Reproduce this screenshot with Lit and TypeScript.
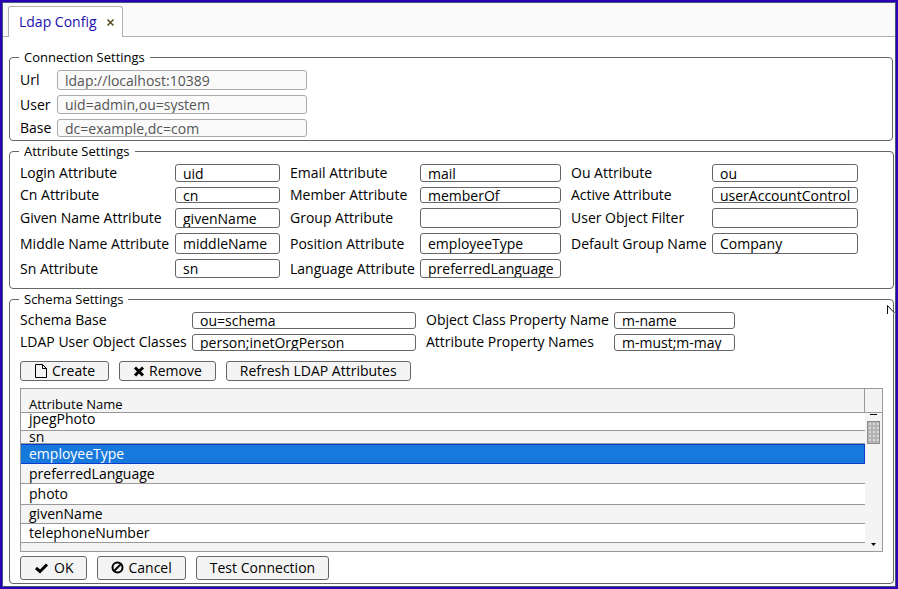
import { LitElement, html, css, svg } from "lit";
import { customElement, property } from "lit/decorators.js";
import { classMap } from "lit/directives/class-map.js";
import { styleMap } from "lit/directives/style-map.js";

interface Field {
  id: string;
  label: string;
  value: string;
}

const connection: Field[] = [
  { id: "url", label: "Url", value: "ldap://localhost:10389" },
  { id: "user", label: "User", value: "uid=admin,ou=system" },
  { id: "base", label: "Base", value: "dc=example,dc=com" },
];

const attributes: Field[] = [
  { id: "login", label: "Login Attribute", value: "uid" },
  { id: "email", label: "Email Attribute", value: "mail" },
  { id: "ou", label: "Ou Attribute", value: "ou" },
  { id: "cn", label: "Cn Attribute", value: "cn" },
  { id: "member", label: "Member Attribute", value: "memberOf" },
  { id: "active", label: "Active Attribute", value: "userAccountControl" },
  { id: "given", label: "Given Name Attribute", value: "givenName" },
  { id: "group", label: "Group Attribute", value: "" },
  { id: "filter", label: "User Object Filter", value: "" },
  { id: "middle", label: "Middle Name Attribute", value: "middleName" },
  { id: "position", label: "Position Attribute", value: "employeeType" },
  { id: "default-group", label: "Default Group Name", value: "Company" },
  { id: "sn", label: "Sn Attribute", value: "sn" },
  { id: "language", label: "Language Attribute", value: "preferredLanguage" },
];

const schema: Field[] = [
  { id: "schema-base", label: "Schema Base", value: "ou=schema" },
  { id: "class-prop", label: "Object Class Property Name", value: "m-name" },
  { id: "user-classes", label: "LDAP User Object Classes", value: "person;inetOrgPerson" },
  { id: "attr-props", label: "Attribute Property Names", value: "m-must;m-may" },
];

const rows = [
  { name: "jpegPhoto", height: 18 },
  { name: "sn", height: 13 },
  { name: "employeeType", height: 20, selected: true },
  { name: "preferredLanguage", height: 20 },
  { name: "photo", height: 21 },
  { name: "givenName", height: 19 },
  { name: "telephoneNumber", height: 19 },
  { name: "", height: 8 },
];

const icons = {
  file: {
    width: 14,
    shape: svg`<path d="M1.5 0.5H8.5L12.5 4.5V13.5H1.5Z M8.5 0.5V4.5H12.5" fill="none" stroke="currentColor"/>`,
  },
  cross: {
    width: 12,
    shape: svg`<path d="M2 3.5L10 11.5M10 3.5L2 11.5" fill="none" stroke="currentColor" stroke-width="3"/>`,
  },
  check: {
    width: 16,
    shape: svg`<path d="M2 7L6 10.5L13 3.5" fill="none" stroke="currentColor" stroke-width="3"/>`,
  },
  ban: {
    width: 13,
    shape: svg`<circle cx="6.5" cy="6.5" r="5" fill="none" stroke="currentColor" stroke-width="2"/><path d="M3 10L10 3" stroke="currentColor" stroke-width="2"/>`,
  },
};

@customElement("icon-button")
export class IconButton extends LitElement {
  @property() icon = "";
  @property() label = "";

  static styles = css`
    :host {
      display: flex;
    }
    .button {
      display: flex;
      align-items: center;
      gap: 4px;
      padding: 0 13px;
      border: 1px solid #666;
      border-radius: 3px;
      background: #f4f4f4;
      color: #000;
      font: inherit;
      line-height: 16px;
      white-space: nowrap;
    }
    .icon {
      height: 14px;
    }
  `;

  render() {
    const icon = icons[this.icon as keyof typeof icons];
    return html`<button class="button" type="button">
      ${icon
        ? html`<svg class="icon" width=${icon.width} viewBox="0 0 ${icon.width} 14" aria-hidden="true">${icon.shape}</svg>`
        : null}
      <span>${this.label}</span>
    </button>`;
  }
}

@customElement("app-root")
export class AppRoot extends LitElement {
  static styles = css`
    :host {
      display: block;
      font-family: "Open Sans", "Noto Sans", sans-serif;
      font-size: 14px;
      line-height: 16px;
      color: #000;
    }
    * {
      box-sizing: border-box;
    }
    .window {
      min-height: 100vh;
      display: flex;
      flex-direction: column;
      border: 2px solid #2a00b4;
      background: #fff;
    }
    .frame {
      flex: 1;
      display: flex;
      flex-direction: column;
      border: 1px solid #44547c;
    }
    .tabs {
      display: flex;
      height: 34px;
      padding: 3px 0 0 5px;
      background: linear-gradient(#b0b0b0, #b0b0b0) bottom / 100% 1px no-repeat #fafafa;
    }
    .tab {
      display: flex;
      align-items: center;
      gap: 9px;
      padding: 0 7px 0 10px;
      border: 1px solid #b0b0b0;
      border-bottom: 0;
      border-radius: 3px 3px 0 0;
      background: #fff;
      color: #1a10b0;
    }
    .close {
      display: flex;
      padding: 0;
      border: 0;
      background: none;
      color: #5a4a20;
    }
    .close-icon {
      width: 9px;
      height: 9px;
    }
    .page {
      flex: 1;
      display: flex;
      flex-direction: column;
      gap: 2px;
      padding: 12px 1px 2px 6px;
    }
    .group {
      min-width: 0;
      margin: 0;
      padding: 0;
      border: 1px solid #666;
      border-radius: 4px;
    }
    .group.connection {
      margin-right: 1px;
      padding-bottom: 3px;
    }
    .group.attributes {
      padding-bottom: 10px;
    }
    .group.schema {
      flex: 1;
    }
    .legend {
      margin-left: 9px;
      padding: 0 5px;
      font-size: 13px;
      line-height: 16px;
    }
    .fields {
      display: grid;
      row-gap: 5px;
      padding-top: 5px;
    }
    .connection .fields {
      grid-template: 20px 19px 18px / 47px 250px;
    }
    .attributes .fields {
      grid-template: 18px 16px 20px 21px 19px / 165px 105px 140px 141px 151px 146px;
    }
    .schema .fields {
      grid-template: 17px 17px / 182px 224px 198px 121px;
    }
    .label {
      display: flex;
      align-items: center;
      min-height: 0;
      padding-left: 10px;
      white-space: nowrap;
    }
    .schema .label {
      padding-bottom: 2px;
    }
    .input {
      width: 100%;
      min-width: 0;
      height: 100%;
      min-height: 0;
      padding: 0 7px;
      border: 1px solid #666;
      border-radius: 3px;
      background: #fff;
      color: #000;
      font: inherit;
    }
    .connection .input {
      border-color: #aaa;
      background: #fafafa;
      color: #555;
    }
    .buttons {
      display: flex;
      gap: 10px;
      padding: 10px 10px 7px;
    }
    .buttons icon-button {
      height: 20px;
    }
    .buttons.footer {
      padding: 4px 10px 0;
    }
    .footer icon-button {
      height: 24px;
    }
    .grid {
      display: flex;
      margin: 0 10px;
      height: 164px;
      border: 1px solid #999;
      overflow: hidden;
      background: #f4f4f4;
    }
    .table {
      flex: 1;
      border-collapse: separate;
      border-spacing: 0;
      table-layout: fixed;
    }
    .head {
      height: 24px;
      padding: 7px 8px 0;
      border-right: 1px solid #999;
      border-bottom: 1px solid #999;
      font-size: 13px;
      font-weight: 400;
      text-align: left;
    }
    .cell {
      padding: 0 8px;
      border-bottom: 1px solid #999;
      background: #fff;
      line-height: 12px;
    }
    .row:first-child .cell {
      vertical-align: top;
    }
    .row:nth-child(even) .cell {
      background: #f4f4f4;
    }
    .row.selected .cell {
      border: solid #0a3cd0;
      border-width: 1px 1px 1px 0;
      background: #1779dc;
      color: #fff;
    }
    .row:last-child .cell {
      border-bottom: 0;
    }
    .scroll {
      display: flex;
      flex-direction: column;
      align-items: center;
      width: 17px;
    }
    .corner {
      width: 100%;
      height: 24px;
      border-bottom: 1px solid #999;
    }
    .arrow {
      width: 7px;
      height: 8px;
    }
    .thumb {
      width: 13px;
      height: 23px;
      border: 1px solid #8c8c8c;
      background: radial-gradient(#d8d8d8 1px, #b4b4b4 1px) 0 0 / 4px 4px;
    }
    .track {
      flex: 1;
      width: 100%;
    }
    .pointer {
      position: absolute;
      top: 304px;
      right: 3px;
      width: 9px;
      height: 14px;
    }
  `;

  private fields(list: Field[], readonly = false) {
    return html`<div class="fields">
      ${list.map(
        (f) => html`<label class="label" for=${f.id}>${f.label}</label>
          <input class="input" id=${f.id} type="text" .value=${f.value} ?readonly=${readonly} />`
      )}
    </div>`;
  }

  render() {
    return html`
      <main class="window">
        <div class="frame">
          <nav class="tabs">
            <div class="tab">
              <span>Ldap Config</span>
              <button class="close" type="button" aria-label="Close tab">
                <svg class="close-icon" viewBox="0 0 9 9" aria-hidden="true">
                  <path d="M1.5 1.5L7.5 7.5M7.5 1.5L1.5 7.5" stroke="currentColor" stroke-width="1.5" />
                </svg>
              </button>
            </div>
          </nav>
          <form class="page">
            <fieldset class="group connection">
              <legend class="legend">Connection Settings</legend>
              ${this.fields(connection, true)}
            </fieldset>
            <fieldset class="group attributes">
              <legend class="legend">Attribute Settings</legend>
              ${this.fields(attributes)}
            </fieldset>
            <fieldset class="group schema">
              <legend class="legend">Schema Settings</legend>
              ${this.fields(schema)}
              <div class="buttons">
                <icon-button icon="file" label="Create"></icon-button>
                <icon-button icon="cross" label="Remove"></icon-button>
                <icon-button label="Refresh LDAP Attributes"></icon-button>
              </div>
              <div class="grid">
                <table class="table">
                  <thead>
                    <tr><th class="head" scope="col">Attribute Name</th></tr>
                  </thead>
                  <tbody>
                    ${rows.map(
                      (r) => html`<tr class=${classMap({ row: true, selected: !!r.selected })}>
                        <td class="cell" style=${styleMap({ height: `${r.height}px` })}>${r.name}</td>
                      </tr>`
                    )}
                  </tbody>
                </table>
                <div class="scroll">
                  <div class="corner"></div>
                  <svg class="arrow" viewBox="0 0 7 8" aria-hidden="true"><path d="M0 1H7V2H0Z" fill="#000" /></svg>
                  <div class="thumb"></div>
                  <div class="track"></div>
                  <svg class="arrow" viewBox="0 0 7 8" aria-hidden="true"><path d="M1 0H6L3.5 3Z" fill="#000" /></svg>
                </div>
              </div>
              <div class="buttons footer">
                <icon-button icon="check" label="OK"></icon-button>
                <icon-button icon="ban" label="Cancel"></icon-button>
                <icon-button label="Test Connection"></icon-button>
              </div>
            </fieldset>
          </form>
        </div>
      </main>
      <svg class="pointer" viewBox="0 0 9 14" aria-hidden="true">
        <path d="M1.5 10V1.5L8.5 9" fill="#fff" stroke="#111" />
      </svg>
    `;
  }
}
